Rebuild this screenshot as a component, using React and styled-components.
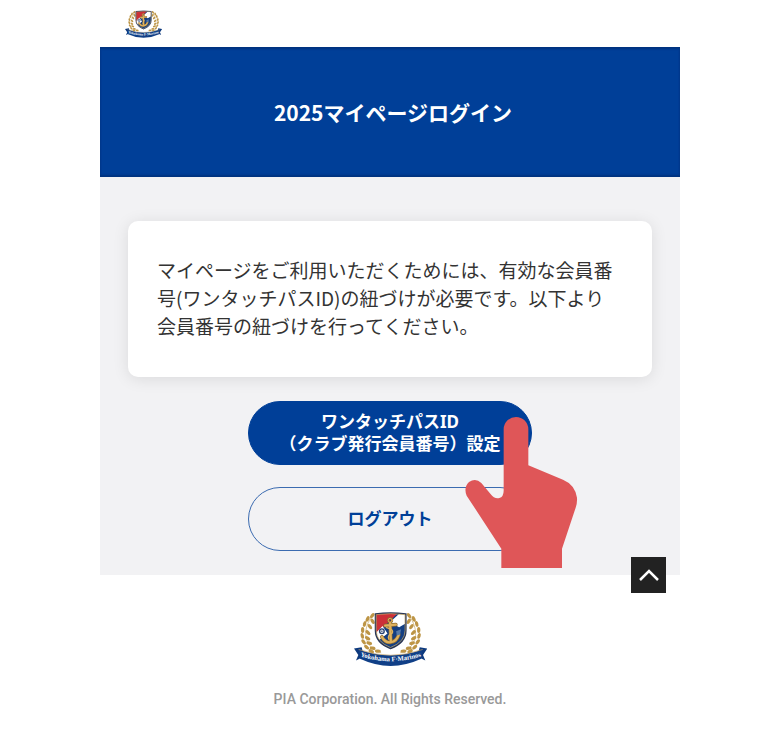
import React from "react";
import styled, { createGlobalStyle, css } from "styled-components";

const GlobalStyle = createGlobalStyle`
  *, *::before, *::after { box-sizing: border-box; }
  body {
    margin: 0;
    background: #fff;
    color: #333;
    font-family: "Noto Sans CJK JP", sans-serif;
  }
`;

const Page = styled.div`
  max-width: 580px;
  margin: 0 auto;
`;

const Header = styled.header`
  padding: 10px 25px 9px;
`;

const LogoLink = styled.a`
  display: block;
  width: 37px;
`;

const CrestSvg = styled.svg`
  display: block;
  width: 100%;
  height: auto;
`;

const Hero = styled.div`
  display: grid;
  place-items: center;
  min-height: 130px;
  padding: 24px;
  background: #003f98;
  box-shadow: inset 0 2px 2px #00337f, inset 0 -2px 2px #00337f;
`;

const Title = styled.h1`
  margin: 0 0 0 6px;
  color: #fff;
  font-size: 21px;
  font-weight: 700;
  line-height: 30px;
`;

const Main = styled.main`
  display: flex;
  flex-direction: column;
  align-items: center;
  gap: 24px;
  padding: 44px 28px 24px;
  background: #f2f2f4;
`;

const Card = styled.section`
  width: 100%;
  padding: 35px 29px 37px;
  background: #fff;
  border-radius: 10px;
  box-shadow: 0 2px 16px rgba(0, 0, 0, 0.1);
`;

const Message = styled.p`
  margin: 0;
  font-size: 19px;
  line-height: 28px;
`;

const Actions = styled.div`
  position: relative;
  display: flex;
  flex-direction: column;
  gap: 22px;
  width: 284px;
`;

const ActionButton = styled.button`
  min-height: 64px;
  padding: 0 20px;
  border: 1px solid #3b6bb0;
  border-radius: 32px;
  background: transparent;
  color: #003f98;
  font: 700 17px/22px "Noto Sans", "Noto Sans CJK JP", sans-serif;
  white-space: nowrap;
  cursor: pointer;
  ${(p) =>
    p.$primary &&
    css`
      border-color: #003f98;
      background: #003f98;
      color: #fff;
    `}
`;

const Pointer = styled.svg`
  position: absolute;
  top: 16px;
  left: 217px;
  width: 113px;
  height: 151px;
  pointer-events: none;
`;

const Footer = styled.footer`
  position: relative;
  display: flex;
  flex-direction: column;
  align-items: center;
  gap: 22px;
  padding: 36px 24px;
`;

const FooterLogo = styled.div`
  width: 73px;
`;

const Copyright = styled.small`
  color: #999;
  font: 500 14px/20px Roboto, sans-serif;
`;

const TopButton = styled.button`
  position: absolute;
  top: -18px;
  right: 14px;
  display: grid;
  place-items: center;
  width: 35px;
  height: 36px;
  padding: 0;
  border: 0;
  background: #222;
  cursor: pointer;
`;

const LEAVES = [
  [97, 47, 35], [83, 57, 25], [98, 64, -30], [74, 72, 15], [90, 80, -35],
  [68, 90, 0], [84, 98, -45], [67, 108, -15], [83, 115, -60], [71, 126, -35],
  [88, 130, -75], [80, 142, -50], [98, 145, -80], [94, 154, -65], [114, 154, -85],
];

function Wreath() {
  return (
    <g fill="#bd9546">
      <path d="M92 55C68 92 70 142 124 159" fill="none" stroke="#c7a763" strokeWidth="2" />
      {LEAVES.map(([x, y, turn]) => (
        <ellipse key={`${x}-${y}`} cx={x} cy={y} rx="5" ry="9" transform={`rotate(${turn} ${x} ${y})`} />
      ))}
    </g>
  );
}

function Crest({ id }) {
  return (
    <CrestSvg viewBox="42 33 220 168" role="img" aria-label="Yokohama F・Marinos">
      <defs>
        <clipPath id={`${id}-shield`}>
          <path d="M107 42Q152 36 198 42V92Q198 129 152 146Q107 129 107 92Z" />
        </clipPath>
        <path id={`${id}-ribbon`} d="M52 167Q152 202 253 167" />
      </defs>
      <Wreath />
      <g transform="translate(305 0) scale(-1 1)">
        <Wreath />
      </g>
      <g clipPath={`url(#${id}-shield)`}>
        <path d="M100 30H205V150H100Z" fill="#143f83" />
        <path d="M100 30H184L107 104H100Z" fill="#cc3038" />
        <path d="M182 38H205V66L178 82L150 67ZM107 100L128 78L143 101L116 122Z" fill="#fff" />
      </g>
      <path d="M107 42Q152 36 198 42V92Q198 129 152 146Q107 129 107 92Z" fill="none" stroke="#293657" strokeWidth="5" />
      <path d="M109 44Q152 38 196 44V91Q196 126 152 143Q109 126 109 91Z" fill="none" stroke="#d1b16c" strokeWidth="2" />
      <g fill="none" stroke="#8c6930" strokeWidth="11" strokeLinecap="round">
        <circle cx="151" cy="61" r="6" strokeWidth="6" />
        <path d="M151 70L153 126M136 77L168 74M126 111Q136 130 153 127Q170 125 177 104" />
      </g>
      <g fill="none" stroke="#dfb25e" strokeWidth="7" strokeLinecap="round">
        <circle cx="151" cy="61" r="6" strokeWidth="3" />
        <path d="M151 70L153 126M136 77L168 74M126 111Q136 130 153 127Q170 125 177 104" />
        <path d="M140 83Q162 88 158 99Q141 107 147 118" strokeWidth="4" />
      </g>
      <circle cx="126" cy="94" r="7" fill="#e8e9ed" stroke="#243f70" strokeWidth="4" />
      <circle cx="126" cy="94" r="2" fill="#243f70" />
      <path d="M169 94L184 88L181 104L171 107Z" fill="#567aa9" />
      <path d="M42 146L65 142L72 170L48 182L55 166Z" fill="#0d397d" />
      <path d="M263 146L240 142L233 170L257 182L250 166Z" fill="#0d397d" />
      <path d="M56 149Q152 184 249 149L245 177Q152 220 60 177Z" fill="#103f87" />
      <path d="M56 149Q152 184 249 149" fill="none" stroke="#c4a061" strokeWidth="2" />
      <text fill="#fff" fontFamily="Liberation Serif, serif" fontWeight="700" fontSize="20" textAnchor="middle">
        <textPath href={`#${id}-ribbon`} startOffset="50%">Yokohama F·Marinos</textPath>
      </text>
    </CrestSvg>
  );
}

export default function App() {
  return (
    <>
      <GlobalStyle />
      <Page>
        <Header>
          <LogoLink href="#" aria-label="Yokohama F・Marinos">
            <Crest id="header" />
          </LogoLink>
        </Header>
        <Hero>
          <Title>2025マイページログイン</Title>
        </Hero>
        <Main>
          <Card>
            <Message>
              マイページをご利用いただくためには、有効な会員番号(ワンタッチパスID)の紐づけが必要です。以下より会員番号の紐づけを行ってください。
            </Message>
          </Card>
          <Actions>
            <ActionButton type="button" $primary>
              ワンタッチパスID
              <br />
              （クラブ発行会員番号）設定
            </ActionButton>
            <ActionButton type="button">ログアウト</ActionButton>
            <Pointer viewBox="0 0 339 453" aria-hidden="true">
              <path
                fill="#df5658"
                d="M116 37A37 37 0 0 1 190 37V145L294 188Q330 203 336 242Q337 258 332 272L291 395V453H109V395L5 236Q-5 212 12 195Q32 181 49 198L76 230Q89 247 103 243Q116 239 116 221Z"
              />
            </Pointer>
          </Actions>
        </Main>
        <Footer>
          <TopButton type="button" aria-label="ページの先頭へ">
            <svg width="22" height="14" viewBox="0 0 22 14" fill="none" stroke="#fff" strokeWidth="2.5" aria-hidden="true">
              <path d="M2 12L11 3L20 12" />
            </svg>
          </TopButton>
          <FooterLogo>
            <Crest id="footer" />
          </FooterLogo>
          <Copyright>PIA Corporation. All Rights Reserved.</Copyright>
        </Footer>
      </Page>
    </>
  );
}
